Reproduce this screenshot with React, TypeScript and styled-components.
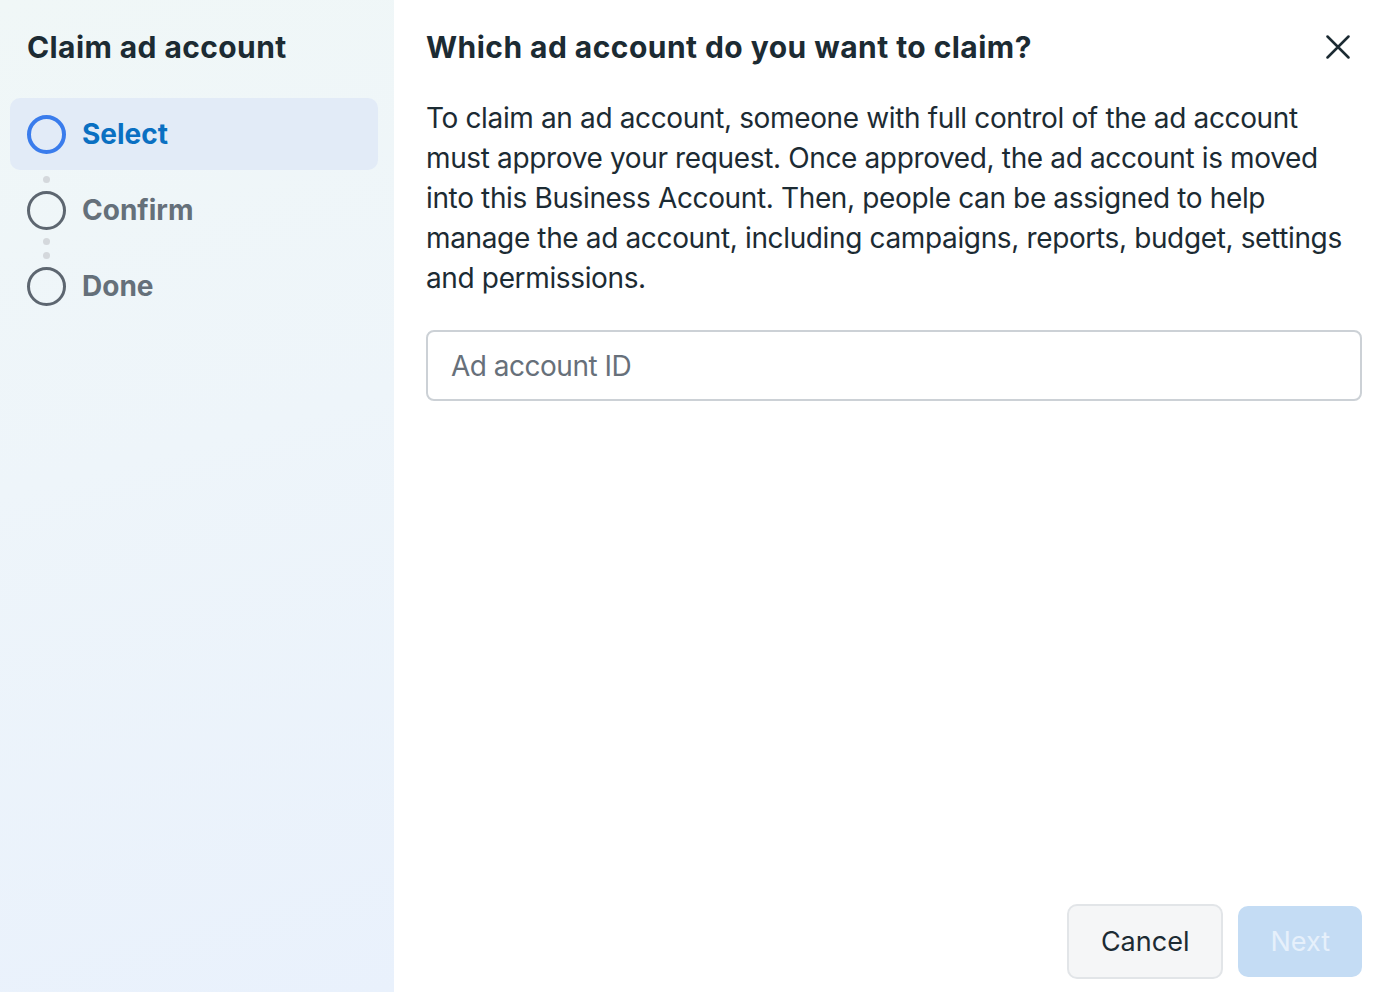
import React from "react";
import styled, { createGlobalStyle } from "styled-components";

const Global = createGlobalStyle`
  html, body { margin: 0; padding: 0; }
  body { font-family: Inter, "Noto Sans", sans-serif; color: #1c2b33; }
  * { box-sizing: border-box; }
`;

const Shell = styled.div`
  display: flex;
  width: 1391px;
  height: 992px;
  background: #ffffff;
  overflow: hidden;
`;

const Sidebar = styled.aside`
  width: 394px;
  flex: none;
  padding: 29px 16px 0 10px;
  background: linear-gradient(165deg, #f0f7f7 0%, #eef5fa 45%, #e9f1fc 100%);
  display: flex;
  flex-direction: column;
`;

const SideTitle = styled.h1`
  margin: 0 0 33px 17px;
  font-family: Inter, sans-serif;
  font-weight: 700;
  font-size: 30px;
  line-height: 36px;
  letter-spacing: 0.4px;
  color: #1c2b33;
`;

const Steps = styled.ol`
  list-style: none;
  margin: 0;
  padding: 0;
  display: flex;
  flex-direction: column;
  gap: 4px;
`;

const StepRow = styled.li<{ $active?: boolean }>`
  height: 72px;
  display: flex;
  align-items: center;
  gap: 16px;
  padding-left: 16px;
  border-radius: 10px;
  background: ${(p) => (p.$active ? "#e2ebf7" : "transparent")};
`;

const IconCol = styled.div`
  width: 40px;
  display: flex;
  flex-direction: column;
  align-items: center;
  gap: 8px;
`;

const Dot = styled.span<{ $hidden?: boolean }>`
  width: 7px;
  height: 7px;
  border-radius: 50%;
  background: #d4d8dc;
  visibility: ${(p) => (p.$hidden ? "hidden" : "visible")};
`;

const Ring = styled.span<{ $active?: boolean }>`
  width: 39px;
  height: 39px;
  border-radius: 50%;
  border: ${(p) => (p.$active ? "4px solid #3a7cec" : "3.5px solid #5d6670")};
`;

const StepLabel = styled.span<{ $active?: boolean }>`
  font-family: Inter, sans-serif;
  font-weight: 700;
  font-size: 28px;
  color: ${(p) => (p.$active ? "#0a70c2" : "#65707a")};
`;

const Main = styled.main`
  flex: 1;
  display: flex;
  flex-direction: column;
  padding: 29px 29px 13px 32px;
`;

const Header = styled.div`
  display: flex;
  align-items: center;
  justify-content: space-between;
  height: 36px;
`;

const Title = styled.h2`
  margin: 0;
  font-family: Inter, sans-serif;
  font-weight: 700;
  font-size: 30px;
  line-height: 36px;
  letter-spacing: 0.45px;
  color: #1c2b33;
`;

const CloseBtn = styled.button`
  border: none;
  background: none;
  padding: 0;
  width: 48px;
  height: 48px;
  display: flex;
  align-items: center;
  justify-content: center;
  color: #1c2b33;
  cursor: pointer;
`;

const Body = styled.p`
  margin: 33px 0 0;
  font-family: Inter, sans-serif;
  font-size: 28px;
  line-height: 40px;
  letter-spacing: -0.36px;
  color: #1c2b33;
`;

const Input = styled.input`
  margin-top: 32px;
  width: 100%;
  height: 71px;
  border: 2px solid #ccd1d6;
  border-radius: 8px;
  padding: 0 23px;
  font-family: Inter, sans-serif;
  font-size: 28px;
  letter-spacing: -0.5px;
  color: #1c2b33;
  outline: none;
  background: #fff;
  &::placeholder { color: #67707a; }
`;

const Footer = styled.div`
  margin-top: auto;
  display: flex;
  justify-content: flex-end;
  align-items: center;
  gap: 15px;
`;

const Button = styled.button<{ $primary?: boolean }>`
  height: ${(p) => (p.$primary ? "71px" : "75px")};
  padding: 0 32px;
  border-radius: 10px;
  font-family: Inter, sans-serif;
  font-size: 27px;
  border: ${(p) => (p.$primary ? "none" : "2px solid #e2e5e8")};
  background: ${(p) => (p.$primary ? "#c4dcf4" : "#f5f6f7")};
  color: ${(p) => (p.$primary ? "#e6f0fb" : "#1c2b33")};
  cursor: pointer;
`;

const steps = ["Select", "Confirm", "Done"];

export default function App() {
  return (
    <>
      <Global />
      <Shell>
        <Sidebar>
          <SideTitle>Claim ad account</SideTitle>
          <Steps>
            {steps.map((s, i) => {
              const active = i === 0;
              const hasAbove = i > 0;
              const hasBelow = i < steps.length - 1 && !active;
              return (
                <StepRow key={s} $active={active}>
                  <IconCol>
                    <Dot $hidden={!hasAbove} />
                    <Ring $active={active} />
                    <Dot $hidden={!hasBelow} />
                  </IconCol>
                  <StepLabel $active={active}>{s}</StepLabel>
                </StepRow>
              );
            })}
          </Steps>
        </Sidebar>
        <Main>
          <Header>
            <Title>Which ad account do you want to claim?</Title>
            <CloseBtn aria-label="Close">
              <svg width="24" height="24" viewBox="0 0 24 24" fill="none">
                <path d="M1.5 1.5 L22.5 22.5 M22.5 1.5 L1.5 22.5" stroke="currentColor" strokeWidth="2.5" strokeLinecap="round" />
              </svg>
            </CloseBtn>
          </Header>
          <Body>
            To claim an ad account, someone with full control of the ad account must approve your request. Once approved, the ad account is moved into this Business Account. Then, people can be assigned to help manage the ad account, including campaigns, reports, budget, settings and permissions.
          </Body>
          <Input placeholder="Ad account ID" />
          <Footer>
            <Button>Cancel</Button>
            <Button $primary>Next</Button>
          </Footer>
        </Main>
      </Shell>
    </>
  );
}
